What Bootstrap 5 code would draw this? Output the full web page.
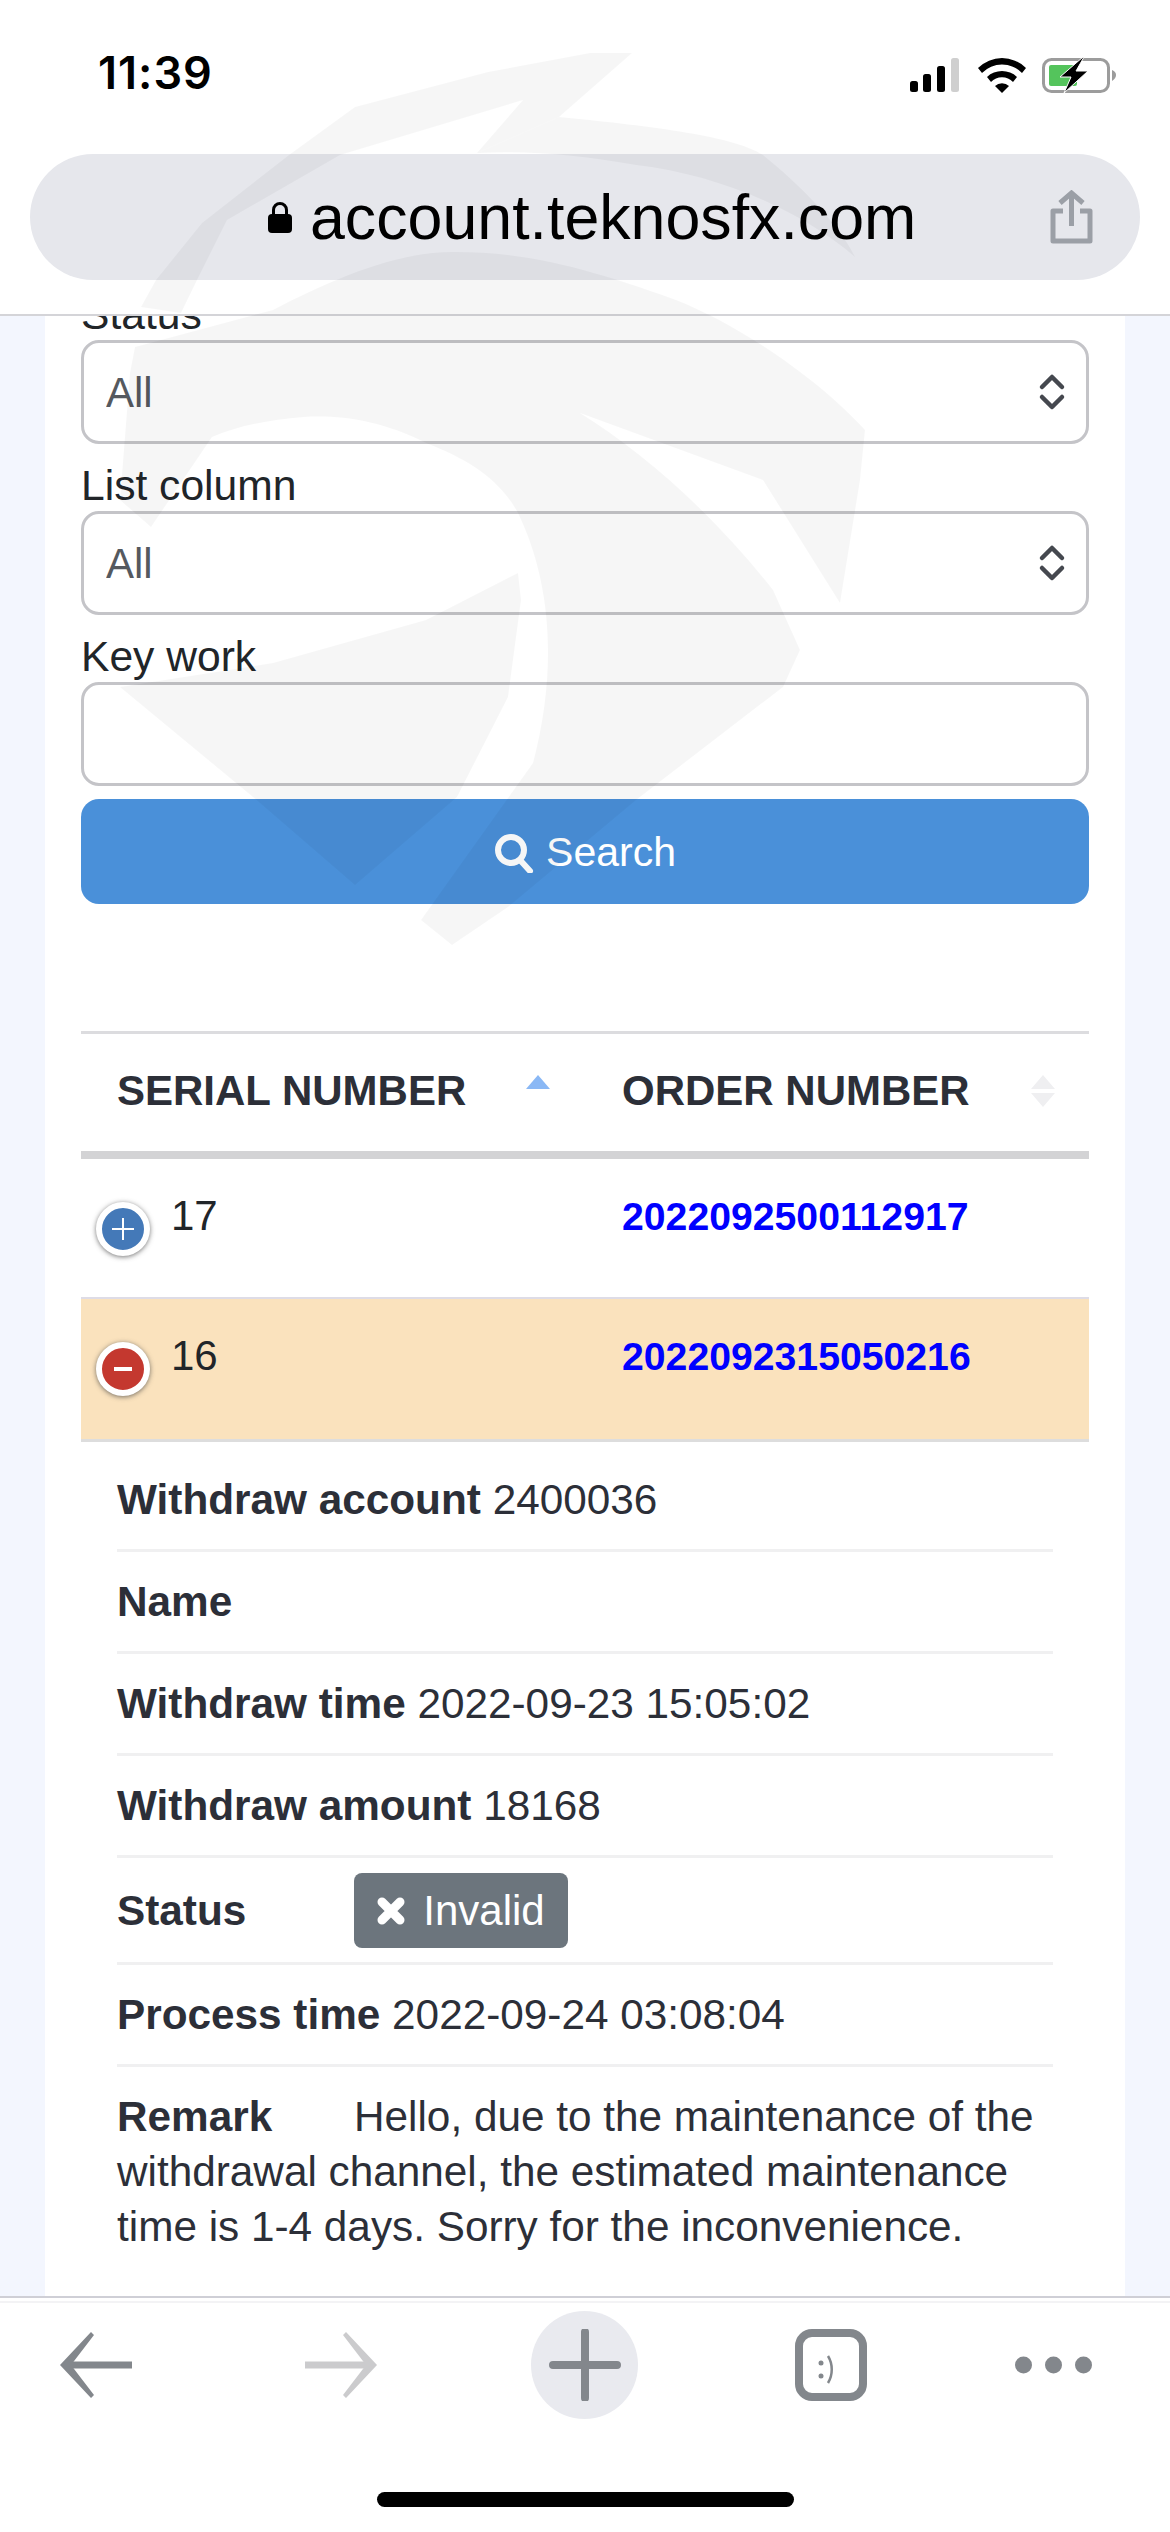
<!DOCTYPE html>
<html lang="en">
<head>
  <meta charset="UTF-8" />
  <meta name="viewport" content="width=device-width, initial-scale=1" />
  <title>Withdraw records</title>
  <link href="https://cdn.jsdelivr.net/npm/bootstrap@5.3.3/dist/css/bootstrap.min.css" rel="stylesheet" />
  <style>
    html, body { height: 2532px; overflow: hidden; }
    body { position: relative; background: #f3f6fe; color: #2c2f38; font-family: "Liberation Sans", Arial, sans-serif; font-size: 42.3px; }

    /* browser chrome */
    .top-chrome { height: 316px; background: #fff; border-bottom: 2px solid #d4d4d8; flex-shrink: 0; }
    .status-row { height: 154px; padding: 56px 47px 0 98px; }
    .clock { font-family: Inter, "Liberation Sans", sans-serif; font-size: 45px; font-weight: 600; letter-spacing: 1px; color: #000; line-height: 34px; }
    .url-pill { height: 126px; margin: 0 30px; background: #e6e7ec; border-radius: 63px; padding: 0 47px 0 238px; }
    .url-text { font-size: 62.7px; color: #000; line-height: 1; margin-left: 18px; }
    .bottom-chrome { height: 236px; background: #fff; border-top: 2px solid #cfcfd6; flex-shrink: 0; box-shadow: inset 0 3px 0 #fff, inset 0 5px 0 #f3f3f5; }
    .tool-row { height: 134px; padding-left: 60px; }
    .tool-fwd { margin-left: 173px; }
    .tool-new { margin-left: 154px; width: 107px; height: 108px; border-radius: 50%; background: #e9eaef; }
    .tool-tabs { margin-left: 157px; }
    .tool-more { margin-left: 148px; }
    .home-bar { width: 417px; height: 15px; background: #000; border-radius: 8px; margin: 60px auto 0; }

    /* page */
    .page-scroll { flex: 1; overflow: hidden; min-height: 0; }
    .page-panel { display: flow-root; height: 100%; margin: 0 45px; background: #fff; padding: 0 36px; }
    .form-stack { margin-top: -24px; }
    .form-stack .form-label { display: block; font-size: 42.6px; line-height: 45px; margin: 0; color: #212529; }
    .form-stack .form-label + .field-box { margin-top: 3px; }
    .field-box { height: 104px; font-size: 42px; color: #55595f; border: 3px solid #c4c4c8; border-radius: 18px; padding: 0 22px; margin-bottom: 19px; background-color: #fff; }
    select.field-box { background-position: right 20px center; background-size: 28px 38px; background-image: url("data:image/svg+xml,%3csvg xmlns='http://www.w3.org/2000/svg' viewBox='0 0 28 38'%3e%3cpath fill='none' stroke='%2345484f' stroke-width='4.5' stroke-linecap='round' stroke-linejoin='round' d='M4 14 14 4l10 10M4 24l10 10 10-10'/%3e%3c/svg%3e"); }
    .key-box { margin-bottom: 13px; }
    .search-btn { height: 105px; background: #4a90d9; border: 0; border-radius: 18px; font-size: 41px; color: #fff; gap: 12px; padding-top: 9px; }

    .record-table { margin: 127px 0 0; table-layout: fixed; width: 100%; }
    .record-table th, .record-table td { padding: 0; border: 0; background: transparent; box-shadow: none; }
    .record-table thead tr { border-top: 3px solid #dcdcdf; border-bottom: 8px solid #d3d3d5; }
    .record-table th { height: 122px; font-size: 42px; font-weight: 700; color: #2c2f38; text-transform: uppercase; vertical-align: middle; position: relative; padding: 0 0 4px 36px; }
    .record-table th:first-child { width: 505px; }
    .sort-mark { position: absolute; top: 41px; }
    .sort-a { right: 36px; }
    .sort-b { right: 34px; }
    .data-row td { height: 143px; font-size: 42px; vertical-align: top; padding-top: 33px; line-height: 48px; padding-left: 36px; }
    .row-one { border-bottom: 2px solid #dedce6; }
    .row-open { background: #fae2bd; border-bottom: 3px solid #dddddd; }
    .order-link { color: #0000ff; font-weight: 700; font-size: 39.2px; text-decoration: none; }
    .row-num { position: relative; padding-left: 90px !important; }
    .toggle-dot { position: absolute; left: 15px; top: 70px; transform: translateY(-50%); width: 54px; height: 54px; border-radius: 50%; border: 6px solid #fff; box-shadow: 0 1px 5px rgba(60,60,60,.7); color: #fff; }
    .toggle-plus { background: #4479b8; }
    .toggle-minus { background: #c4382f; }

    .detail-cell { padding: 8px 36px 0 !important; }
    .detail-list .detail-item { background: transparent; border: 0; border-bottom: 3px solid #f0f0f1; padding: 22px 0; font-size: 42.3px; line-height: 55px; color: #2c2f38; }
    .detail-list .detail-state { padding: 15px 0 14px; }
    .detail-wide { display: inline-block; min-width: 237px; }
    .detail-state .detail-wide { vertical-align: middle; }
    .state-chip { background: #6c757d; color: #fff; border-radius: 8px; height: 75px; width: 214px; font-size: 42px; gap: 18px; vertical-align: middle; }

    /* faint logo that lies over everything */
    .watermark { position: absolute; left: 0; top: 0; pointer-events: none; }
  </style>
</head>
<body class="d-flex flex-column">
  <header class="top-chrome">
    <div class="status-row d-flex justify-content-between align-items-start">
      <span class="clock">11:39</span>
      <svg width="215" height="38" viewBox="0 0 215 38">
        <rect x="2" y="25" width="8" height="11" rx="2.5" fill="#000"/>
        <rect x="15" y="18" width="8" height="18" rx="2.5" fill="#000"/>
        <rect x="29" y="10" width="8" height="26" rx="2.5" fill="#000"/>
        <rect x="43" y="2" width="8" height="34" rx="2.5" fill="#cfcfcf"/>
        <path d="M70 12a34 34 0 0 1 48 0l-4 5a28 28 0 0 0-40 0z" fill="#000"/>
        <path d="M79 21a22 22 0 0 1 30 0l-4 5a15 15 0 0 0-22 0z" fill="#000"/>
        <path d="M87 30a10 10 0 0 1 14 0l-7 7z" fill="#000"/>
        <rect x="135.500" y="3.500" width="65" height="32" rx="8" fill="none" stroke="#9c9c9c" stroke-width="3"/>
        <rect x="141" y="9" width="28" height="21" rx="2" fill="#54c45c"/>
        <path d="M204 14c3 1 4 3 4 5s-1 4-4 6z" fill="#9c9c9c"/>
        <path d="M175 1 152 21h11l-7 16 24-22h-12l8-14z" fill="#000" stroke="#fff" stroke-width="1"/>
      </svg>
    </div>
    <div class="url-pill d-flex align-items-center">
      <svg width="24" height="31" viewBox="0 0 24 31"><path d="M5.500 13V8a6.500 6.500 0 0 1 13 0v5" fill="none" stroke="#000" stroke-width="3"/><rect y="12" width="24" height="19" rx="4" fill="#000"/></svg>
      <span class="url-text">account.teknosfx.com</span>
      <svg class="ms-auto" width="43" height="54" viewBox="0 0 43 54" fill="none" stroke="#9b9fa6" stroke-width="5">
        <path d="M21.500 36V4M10 13 21.500 3 33 13"/>
        <path d="M13 21H3v30h37V21H30" stroke-linejoin="round"/>
      </svg>
    </div>
  </header>

  <main class="page-scroll">
    <div class="page-panel">
      <form class="form-stack">
        <label class="form-label">Status</label>
        <select class="form-select field-box"><option>All</option></select>
        <label class="form-label">List column</label>
        <select class="form-select field-box"><option>All</option></select>
        <label class="form-label">Key work</label>
        <input class="form-control field-box key-box" type="text" />
        <button class="btn btn-primary search-btn w-100 d-flex align-items-center justify-content-center" type="button">
          <svg width="40" height="40" viewBox="0 0 40 40" fill="none" stroke="#fff" stroke-width="6"><circle cx="17" cy="17" r="13"/><path d="M26 27l10 11" stroke-linecap="round"/></svg>
          Search
        </button>
      </form>

      <table class="table record-table">
        <thead>
          <tr>
            <th>Serial number
              <svg class="sort-mark sort-a" width="24" height="14" viewBox="0 0 24 14"><path d="M12 0 24 14H0z" fill="#8ab8f5"/></svg>
            </th>
            <th>Order number
              <svg class="sort-mark sort-b" width="24" height="32" viewBox="0 0 24 32"><path d="M12 0 24 14H0zM12 32 0 18h24z" fill="#efeff1"/></svg>
            </th>
          </tr>
        </thead>
        <tbody>
          <tr class="data-row row-one">
            <td class="row-num"><span class="toggle-dot toggle-plus d-flex align-items-center justify-content-center">
              <svg width="22" height="22" viewBox="0 0 22 22"><path d="M11 0v22M0 11h22" stroke="#fff" stroke-width="2"/></svg>
            </span>17</td>
            <td><a class="order-link" href="#">2022092500112917</a></td>
          </tr>
          <tr class="data-row row-open">
            <td class="row-num"><span class="toggle-dot toggle-minus d-flex align-items-center justify-content-center">
              <svg width="20" height="6" viewBox="0 0 20 6"><path d="M1 3h18" stroke="#fff" stroke-width="4"/></svg>
            </span>16</td>
            <td><a class="order-link" href="#">2022092315050216</a></td>
          </tr>
          <tr>
            <td class="detail-cell" colspan="2">
              <ul class="list-group list-group-flush detail-list">
                <li class="list-group-item detail-item"><strong>Withdraw account</strong> 2400036</li>
                <li class="list-group-item detail-item"><strong>Name</strong></li>
                <li class="list-group-item detail-item"><strong>Withdraw time</strong> 2022-09-23 15:05:02</li>
                <li class="list-group-item detail-item"><strong>Withdraw amount</strong> 18168</li>
                <li class="list-group-item detail-item detail-state"><strong class="detail-wide">Status</strong><span class="state-chip d-inline-flex align-items-center justify-content-center">
                  <svg width="28" height="28" viewBox="0 0 28 28"><path d="M5 5l18 18M23 5 5 23" stroke="#fff" stroke-width="9" stroke-linecap="round"/></svg>
                  Invalid</span></li>
                <li class="list-group-item detail-item"><strong>Process time</strong> 2022-09-24 03:08:04</li>
                <li class="list-group-item detail-item"><strong class="detail-wide">Remark</strong>Hello, due to the maintenance of the withdrawal channel, the estimated maintenance time is 1-4 days. Sorry for the inconvenience.</li>
              </ul>
            </td>
          </tr>
        </tbody>
      </table>
    </div>
  </main>

  <footer class="bottom-chrome">
    <div class="tool-row d-flex align-items-center">
      <svg width="72" height="66" viewBox="0 0 72 66"><path d="M31 0l3 3L11 33l23 30-3 3L0 33z" fill="#83878c"/><path d="M6 33h66" stroke="#83878c" stroke-width="7"/></svg>
      <svg class="tool-fwd" width="72" height="66" viewBox="0 0 72 66"><path d="M41 0l-3 3 23 30-23 30 3 3 31-33z" fill="#cbcbcd"/><path d="M66 33H0" stroke="#cbcbcd" stroke-width="7"/></svg>
      <span class="tool-new d-flex align-items-center justify-content-center">
        <svg width="72" height="72" viewBox="0 0 72 72"><path d="M36 3v66M4 36h64" stroke="#83878c" stroke-width="8" stroke-linecap="round"/></svg>
      </span>
      <svg class="tool-tabs" width="72" height="72" viewBox="0 0 72 72" fill="none"><rect x="4" y="4" width="64" height="64" rx="13" stroke="#83878c" stroke-width="8"/><circle cx="26" cy="34" r="2.500" fill="#83878c"/><circle cx="26" cy="47" r="2.500" fill="#83878c"/><path d="M33 27c5 8 5 19 0 27" stroke="#83878c" stroke-width="2.500"/></svg>
      <svg class="tool-more" width="77" height="18" viewBox="0 0 77 18" fill="#83878c"><circle cx="8.500" cy="9" r="8.500"/><circle cx="38.500" cy="9" r="8.500"/><circle cx="68.500" cy="9" r="8.500"/></svg>
    </div>
    <div class="home-bar"></div>
  </footer>

  <svg class="watermark" width="1170" height="1000" viewBox="0 0 1170 1000" fill="#000" fill-opacity=".035">
    <path d="M632 53H590L488 72 355 107 289 155 202 223 156 280 141 307 181 313 197 280 227 220 340 155 523 100 477 153 559 117z"/>
    <path d="M559 117C640 125 733 135 763 155 800 185 840 225 855 257 800 210 720 175 636 165 580 155 530 150 477 153z"/>
    <path d="M273 310C330 280 400 250 457 252 520 252 580 265 676 300 740 325 820 380 865 430L860 480 840 603 763 480 580 413C640 450 710 510 773 590L800 650 783 687 636 800 508 907 452 945 421 920 533 763C555 680 555 590 518 513 500 480 470 460 426 443 380 420 340 415 304 417 270 420 240 425 212 437L151 527 120 500 130 373 135 347z"/>
    <path d="M120 687 273 663 426 620 518 573 521 600 508 697 457 797 355 885 253 797z"/>
  </svg>
</body>
</html>
